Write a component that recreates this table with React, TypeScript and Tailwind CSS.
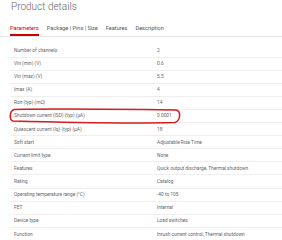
import React from "react";

const rows: [string, string][] = [
  ["Number of channels", "2"],
  ["Vin (min) (V)", "0.6"],
  ["Vin (max) (V)", "5.5"],
  ["Imax (A)", "4"],
  ["Ron (typ) (mΩ)", "14"],
  ["Shutdown current (ISD) (typ) (µA)", "0.0001"],
  ["Quiescent current (Iq) (typ) (µA)", "18"],
  ["Soft start", "Adjustable Rise Time"],
  ["Current limit type", "None"],
  ["Features", "Quick output discharge, Thermal shutdown"],
  ["Rating", "Catalog"],
  ["Operating temperature range (°C)", "-40 to 105"],
  ["FET", "Internal"],
  ["Device type", "Load switches"],
  ["Function", "Inrush current control, Thermal shutdown"],
];

const tabs = ["Parameters", "Package | Pins | Size", "Features", "Description"];

export default function App() {
  return (
    <div className="relative w-[282px] h-[240px] overflow-hidden bg-white font-['Roboto',sans-serif]">
      <h1 className="pl-[11px] text-[10px] leading-[14px] font-light text-[#666]">Product details</h1>
      <div className="mt-[10px] flex gap-[8px] pl-[10px] border-b border-[#e6e6e6]">
        {tabs.map((t, i) => (
          <div
            key={t}
            className={
              i === 0
                ? "text-[5.6px] leading-[8px] pb-[2px] border-b-2 border-[#cc0000] text-[#cc0000]"
                : "text-[5.6px] leading-[8px] pb-[2px] border-b-2 border-transparent text-[#555]"
            }
          >
            {t}
          </div>
        ))}
      </div>
      <div className="mt-[7.5px] ml-[10px]">
        {rows.map(([k, v], i) => (
          <div
            key={k}
            className={
              i === rows.length - 1
                ? "flex items-center h-[13.1px] text-[4.8px] text-[#666]"
                : "flex items-center h-[13.1px] text-[4.8px] text-[#666] border-b border-[#eeeeee]"
            }
          >
            <div className="w-[147px] pl-[4px] whitespace-nowrap">{k}</div>
            <div className="whitespace-nowrap">{v}</div>
          </div>
        ))}
      </div>
      <svg className="absolute left-0 top-0" width="282" height="240" viewBox="0 0 282 240">
        <path
          d="M 14 109.5 C 60 108.5, 140 109.5, 176 110 C 181 111, 181 120, 175 122.5 C 130 123.5, 50 122, 13 121 C 9 120, 9.5 111, 14 109.5"
          fill="none"
          stroke="#d8191e"
          strokeWidth="1.5"
        />
      </svg>
    </div>
  );
}
